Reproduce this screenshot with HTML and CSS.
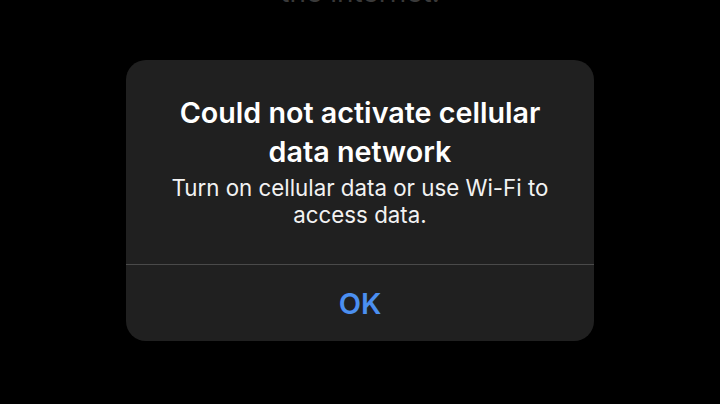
FILE: index.html
```html
<!DOCTYPE html>
<html lang="en">
<head>
    <meta charset="UTF-8">
    <meta name="viewport" content="width=device-width, initial-scale=1.0">
    <title>Cellular Data</title>
    <link rel="stylesheet" href="styles.css">
</head>
<body>
    <div class="screen">
        <!-- Page text behind the alert, scrolled mostly off the top -->
        <p class="behind">the internet.</p>

        <!-- Alert box -->
        <div class="alert">
            <div class="alert-body">
                <h1 class="alert-title">Could not activate cellular data network</h1>
                <p class="alert-message">Turn on cellular data or use Wi-Fi to access data.</p>
            </div>
            <button class="alert-button">OK</button>
        </div>
    </div>
</body>
</html>
```

FILE: styles.css
```css
/* Dark alert over a black screen */
body {
    margin: 0;
    background-color: #000;
    font-family: Inter, "Noto Sans", sans-serif;
}

.screen {
    width: 720px;
    height: 404px;
    overflow: hidden;
    display: flex;
    flex-direction: column;
    align-items: center;
}

.behind {
    margin: -24px 0 0 0;
    height: 32px;
    font-size: 28px;
    line-height: 32px;
    color: #3a3a3a;
}

.alert {
    width: 468px;
    margin-top: 52px;
    background-color: #202020;
    border-radius: 20px;
    display: flex;
    flex-direction: column;
    overflow: hidden;
}

.alert-body {
    padding: 33px 30px 36px 30px;
    text-align: center;
    border-bottom: 1px solid #4a4a4a;
}

.alert-title {
    margin: 0;
    font-size: 28.7px;
    line-height: 39px;
    font-weight: 600;
    color: #fff;
}

.alert-message {
    margin: 3px 0 0 0;
    font-size: 22.3px;
    line-height: 27px;
    color: #f2f2f2;
}

.alert-button {
    height: 76px;
    padding: 0;
    border: none;
    background: none;
    font-family: inherit;
    font-size: 29px;
    font-weight: 600;
    color: #4b8ff0;
    cursor: pointer;
}
```
